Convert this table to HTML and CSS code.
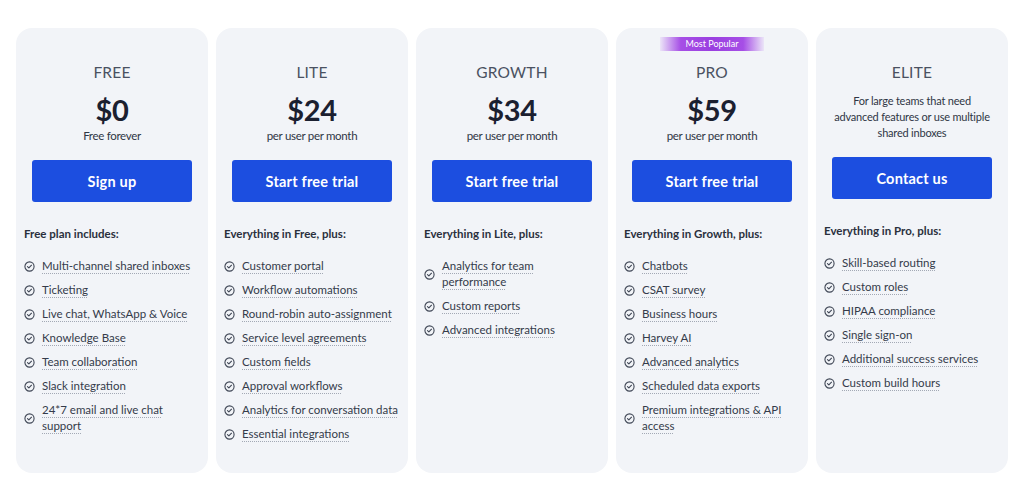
FILE: index.html
```html
<!DOCTYPE html>
<html lang="en">
<head>
<meta charset="utf-8">
<link rel="stylesheet" href="styles.css">
</head>
<body>
<svg width="0" height="0" class="defs" aria-hidden="true">
  <symbol id="chk" viewBox="0 0 12 12">
    <circle cx="6" cy="6" r="5" fill="none" stroke="currentColor" stroke-width="1.2"/>
    <path d="M3.8 6.2 L5.3 7.6 L8.2 4.6" fill="none" stroke="currentColor" stroke-width="1.2" stroke-linecap="round" stroke-linejoin="round"/>
  </symbol>
</svg>
<div class="plans">
  <div class="card">
    <div class="name">FREE</div>
    <div class="price">$0</div>
    <div class="per">Free forever</div>
    <a class="btn">Sign up</a>
    <div class="features">
      <div class="fhead">Free plan includes:</div>
      <ul>
        <li><svg><use href="#chk"/></svg><span>Multi-channel shared inboxes</span></li>
        <li><svg><use href="#chk"/></svg><span>Ticketing</span></li>
        <li><svg><use href="#chk"/></svg><span>Live chat, WhatsApp &amp; Voice</span></li>
        <li><svg><use href="#chk"/></svg><span>Knowledge Base</span></li>
        <li><svg><use href="#chk"/></svg><span>Team collaboration</span></li>
        <li><svg><use href="#chk"/></svg><span>Slack integration</span></li>
        <li><svg><use href="#chk"/></svg><span>24*7 email and live chat<br>support</span></li>
      </ul>
    </div>
  </div>
  <div class="card">
    <div class="name">LITE</div>
    <div class="price">$24</div>
    <div class="per">per user per month</div>
    <a class="btn">Start free trial</a>
    <div class="features">
      <div class="fhead">Everything in Free, plus:</div>
      <ul>
        <li><svg><use href="#chk"/></svg><span>Customer portal</span></li>
        <li><svg><use href="#chk"/></svg><span>Workflow automations</span></li>
        <li><svg><use href="#chk"/></svg><span>Round-robin auto-assignment</span></li>
        <li><svg><use href="#chk"/></svg><span>Service level agreements</span></li>
        <li><svg><use href="#chk"/></svg><span>Custom fields</span></li>
        <li><svg><use href="#chk"/></svg><span>Approval workflows</span></li>
        <li><svg><use href="#chk"/></svg><span>Analytics for conversation data</span></li>
        <li><svg><use href="#chk"/></svg><span>Essential integrations</span></li>
      </ul>
    </div>
  </div>
  <div class="card">
    <div class="name">GROWTH</div>
    <div class="price">$34</div>
    <div class="per">per user per month</div>
    <a class="btn">Start free trial</a>
    <div class="features">
      <div class="fhead">Everything in Lite, plus:</div>
      <ul>
        <li><svg><use href="#chk"/></svg><span>Analytics for team<br>performance</span></li>
        <li><svg><use href="#chk"/></svg><span>Custom reports</span></li>
        <li><svg><use href="#chk"/></svg><span>Advanced integrations</span></li>
      </ul>
    </div>
  </div>
  <div class="card popular">
    <div class="badge">Most Popular</div>
    <div class="name">PRO</div>
    <div class="price">$59</div>
    <div class="per">per user per month</div>
    <a class="btn">Start free trial</a>
    <div class="features">
      <div class="fhead">Everything in Growth, plus:</div>
      <ul>
        <li><svg><use href="#chk"/></svg><span>Chatbots</span></li>
        <li><svg><use href="#chk"/></svg><span>CSAT survey</span></li>
        <li><svg><use href="#chk"/></svg><span>Business hours</span></li>
        <li><svg><use href="#chk"/></svg><span>Harvey AI</span></li>
        <li><svg><use href="#chk"/></svg><span>Advanced analytics</span></li>
        <li><svg><use href="#chk"/></svg><span>Scheduled data exports</span></li>
        <li><svg><use href="#chk"/></svg><span>Premium integrations &amp; API<br>access</span></li>
      </ul>
    </div>
  </div>
  <div class="card elite">
    <div class="name">ELITE</div>
    <div class="desc">For large teams that need advanced features or use multiple shared inboxes</div>
    <a class="btn">Contact us</a>
    <div class="features">
      <div class="fhead">Everything in Pro, plus:</div>
      <ul>
        <li><svg><use href="#chk"/></svg><span>Skill-based routing</span></li>
        <li><svg><use href="#chk"/></svg><span>Custom roles</span></li>
        <li><svg><use href="#chk"/></svg><span>HIPAA compliance</span></li>
        <li><svg><use href="#chk"/></svg><span>Single sign-on</span></li>
        <li><svg><use href="#chk"/></svg><span>Additional success services</span></li>
        <li><svg><use href="#chk"/></svg><span>Custom build hours</span></li>
      </ul>
    </div>
  </div>
</div>
</body>
</html>
```
FILE: styles.css
```css
* { box-sizing: border-box; }
html, body { margin: 0; padding: 0; background: #ffffff; }
body {
  font-family: Lato, "Noto Sans", sans-serif;
  color: #2f3645;
  width: 1024px;
  height: 498px;
  overflow: hidden;
}
.defs { position: absolute; }
.plans {
  display: grid;
  grid-template-columns: repeat(5, 192px);
  column-gap: 8px;
  padding: 28px 16px 0 16px;
}
.card {
  position: relative;
  height: 445px;
  background: #f2f4f8;
  border-radius: 16px;
  padding: 34px 16px 0 16px;
  display: flex;
  flex-direction: column;
  align-items: stretch;
  text-align: center;
}
.name {
  font-size: 15.5px;
  line-height: 20px;
  color: #4a5161;
  letter-spacing: 0.2px;
}
.price {
  margin-top: 11px;
  font-size: 29px;
  line-height: 34px;
  font-weight: 700;
  color: #1b2030;
  letter-spacing: -0.3px;
}
.per {
  margin-top: 2px;
  font-size: 11.5px;
  line-height: 14px;
  color: #2f3645;
  letter-spacing: -0.3px;
}
.desc {
  margin-top: 11px;
  font-size: 11px;
  line-height: 16px;
  color: #2f3645;
  letter-spacing: -0.2px;
  padding: 0 2px;
}
.btn {
  display: flex;
  align-items: center;
  justify-content: center;
  height: 42px;
  margin-top: 17px;
  background: #1c4ee0;
  color: #ffffff;
  border-radius: 3px;
  font-size: 14.5px;
  font-weight: 700;
  letter-spacing: 0.2px;
}
.elite .btn { margin-top: 16px; }
.features {
  margin: 24px -8px 0 -8px;
  text-align: left;
}
.fhead {
  font-size: 11.5px;
  line-height: 16px;
  font-weight: 700;
  color: #2a303d;
}
ul {
  list-style: none;
  margin: 16px 0 0 0;
  padding: 0;
  display: flex;
  flex-direction: column;
  gap: 8px;
}
li {
  display: flex;
  align-items: center;
  gap: 7px;
  font-size: 11.5px;
  line-height: 16px;
  color: #343b4a;
  letter-spacing: 0;
}
li svg {
  flex: none;
  width: 11px;
  height: 11px;
  color: #3f4655;
}
li span {
  white-space: nowrap;
  text-decoration: underline dotted #a3a9b5;
  text-decoration-thickness: 1px;
  text-underline-offset: 3px;
}
.badge {
  position: absolute;
  top: 9px;
  left: 44px;
  width: 104px;
  height: 14px;
  font-size: 9px;
  line-height: 14px;
  color: #ffffff;
  text-align: center;
  background: linear-gradient(90deg, rgba(176, 96, 240, 0.1) 0%, #a64ee6 20%, #9a3fe0 50%, #a64ee6 80%, rgba(176, 96, 240, 0.1) 100%);
}
```
